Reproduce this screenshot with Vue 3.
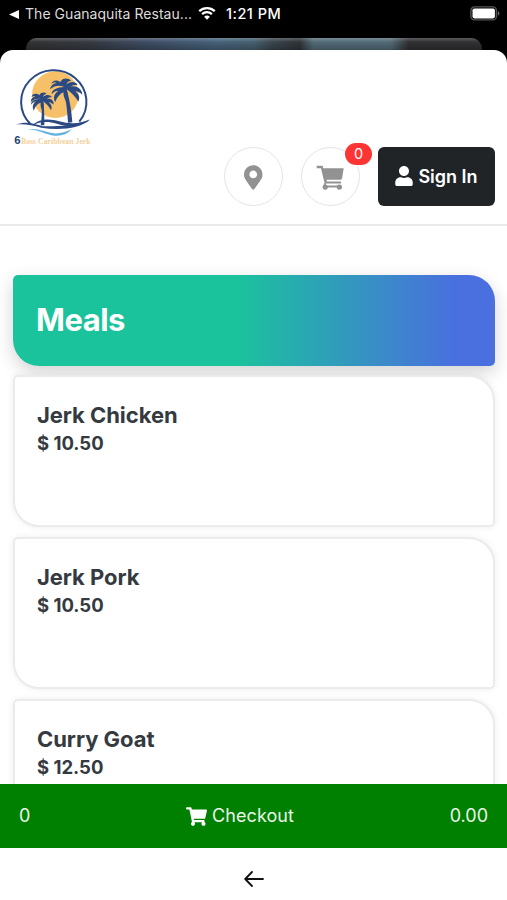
<script setup>
const meals = [
  { name: 'Jerk Chicken', price: '$ 10.50' },
  { name: 'Jerk Pork', price: '$ 10.50' },
  { name: 'Curry Goat', price: '$ 12.50' },
]
const cart = { count: 0, total: '0.00' }
const cartPath = 'M528.12 301.319l47.273-208C578.806 78.301 567.391 64 551.99 64H159.208l-9.166-44.81C147.758 8.021 137.93 0 126.529 0H24C10.745 0 0 10.745 0 24v16c0 13.255 10.745 24 24 24h69.883l70.248 343.435C147.325 417.1 136 435.222 136 456c0 30.928 25.072 56 56 56s56-25.072 56-56c0-15.674-6.447-29.835-16.824-40h209.647C430.447 426.165 424 440.326 424 456c0 30.928 25.072 56 56 56s56-25.072 56-56c0-22.172-12.888-41.332-31.579-50.405l5.517-24.276c3.413-15.018-8.002-29.319-23.403-29.319H218.117l-6.545-32h293.145c11.206 0 20.92-7.754 23.403-18.681z'
</script>

<template>
  <div class="screen">
    <div class="status">
      <svg class="back-tri" viewBox="0 0 10 9"><path d="M0 4.5L10 0v9z" /></svg>
      <span class="from-app">The Guanaquita Restau...</span>
      <svg class="wifi" viewBox="0 0 18 14">
        <path d="M1.2 5.2a11.4 11.4 0 0 1 15.6 0M4.1 8.1a7.2 7.2 0 0 1 9.8 0" />
        <path class="dot" d="M9 13.8L6.1 10.8a4.2 4.2 0 0 1 5.8 0z" />
      </svg>
      <span class="time">1:21 PM</span>
      <svg class="battery" viewBox="0 0 30 15">
        <rect class="shell" x=".9" y=".9" width="25.5" height="13" rx="3.5" />
        <rect class="charge" x="2.5" y="2.4" width="22.4" height="10" rx="1.8" />
        <path class="tip" d="M27.8 5.2c2.2.5 2.2 3.9 0 4.4z" />
      </svg>
    </div>
    <div class="behind"></div>

    <main class="sheet">
      <header class="header">
        <svg class="logo" viewBox="0 0 240 255">
          <circle cx="127" cy="89" r="70" fill="#f6c068" />
          <path d="M53 178A98 95 0 1 1 199 170" fill="none" stroke="#2b4a84" stroke-width="6" />
          <g fill="#2b4a84">
            <path d="M151 72C157 95 163 130 165 173L178 172C175 130 168 96 160 72z" />
            <path d="M84 106C88 130 87 155 83 181L94 181C94 153 94 127 90 106z" />
            <path d="M153 66C139 60 126 61 111 73C113 61 123 55 131 54C124 51 119 53 115 57C118 45 132 43 142 51C148 38 167 38 174 48C165 48 162 53 161 58C172 48 188 49 194 59C184 59 176 61 171 65C190 61 207 71 208 89C201 83 194 79 187 79C198 88 202 98 196 110C188 96 176 84 161 73C166 86 165 99 158 108C154 100 151 91 151 82C143 85 132 97 127 111C119 100 123 86 136 77C128 77 120 82 116 88C115 75 133 66 153 66z" />
            <path d="M84 102C74 99 62 102 53 111C53 101 59 96 67 95C62 93 58 94 56 96C58 86 70 83 79 91C81 83 93 79 101 86C94 88 91 91 91 95C99 88 112 88 117 97C109 97 104 99 101 101C115 99 123 108 122 119C116 114 111 111 107 112C116 119 118 128 114 136C108 124 99 116 90 109C94 120 93 129 87 135C83 128 82 120 83 113C73 116 65 125 63 137C56 127 60 116 69 109C62 110 58 114 55 119C52 108 67 101 84 102z" />
            <g transform="translate(-16.700 0) scale(1.168 1)">
              <path d="M22 179C49 167 68 176 91 184C132 185 175 180 212 164C187 190 136 197 87 188C64 181 43 176 22 179z" />
              <path d="M65 180C83 160 109 161 133 169C161 178 188 177 212 163C185 188 154 186 127 176C104 168 85 169 65 180z" />
            </g>
          </g>
          <path d="M40 194C73 187 96 202 122 205C141 206 158 202 175 193C158 217 124 215 99 206C77 198 58 193 40 194z" fill="#65b4df" />
          <text class="logo-six" x="4" y="238">6</text>
          <text class="logo-name" x="24" y="236" textLength="209" lengthAdjust="spacingAndGlyphs">Boss Caribbean Jerk</text>
        </svg>
        <nav class="actions">
          <button class="round" aria-label="Location">
            <svg class="pin" viewBox="0 0 384 512"><path d="M172.268 501.67C26.97 291.031 0 269.413 0 192 0 85.961 85.961 0 192 0s192 85.961 192 192c0 77.413-26.97 99.031-172.268 309.67-9.535 13.774-29.93 13.773-39.464 0zM192 272c44.183 0 80-35.817 80-80s-35.817-80-80-80-80 35.817-80 80 35.817 80 80 80z" /></svg>
          </button>
          <button class="round" aria-label="Cart">
            <svg class="basket" viewBox="0 0 88 80">
              <path d="M2 4H20L22 12H84L79 43Q78 47 74 47H32L33 52H76V58H31Q26 58 25 53L15 12H2z" />
              <path d="M28 57L25 67H72" class="rail" />
              <circle cx="28" cy="69" r="8" /><circle cx="71" cy="69" r="8" />
            </svg>
            <span class="badge">{{ cart.count }}</span>
          </button>
          <button class="signin">
            <svg class="user" viewBox="0 0 448 512"><path d="M224 256c70.700 0 128-57.300 128-128S294.700 0 224 0 96 57.300 96 128s57.300 128 128 128zm89.600 32h-16.700c-22.200 10.200-46.900 16-72.900 16s-50.600-5.800-72.900-16h-16.700C60.200 288 0 348.200 0 422.400V464c0 26.500 21.500 48 48 48h352c26.500 0 48-21.500 48-48v-41.600c0-74.200-60.200-134.400-134.400-134.400z" /></svg>
            <span>Sign In</span>
          </button>
        </nav>
      </header>

      <section class="menu">
        <h1 class="category">Meals</h1>
        <article v-for="meal in meals" :key="meal.name" class="meal">
          <h2>{{ meal.name }}</h2>
          <p>{{ meal.price }}</p>
        </article>
      </section>
    </main>

    <div class="checkout">
      <span>{{ cart.count }}</span>
      <span class="label">
        <svg class="cart" viewBox="0 0 576 512"><path :d="cartPath" /></svg>
        <span>Checkout</span>
      </span>
      <span class="total">{{ cart.total }}</span>
    </div>
    <footer class="bottom">
      <svg viewBox="0 0 20 16"><path d="M19 8H1.500M8 1L1.200 8L8 15" /></svg>
    </footer>
  </div>
</template>

<style>
body { margin: 0; background: #000; }
</style>

<style scoped>
* { box-sizing: border-box; }
.screen { width: 507px; height: 900px; display: flex; flex-direction: column; overflow: hidden; background: #000; font-family: Inter, "Liberation Sans", sans-serif; color: #343a40; }
.status { flex: none; height: 38px; display: flex; align-items: center; padding: 0 7px 10px 9px; color: #ddd; font-size: 14px; line-height: 18px; white-space: nowrap; }
.back-tri { width: 10px; height: 9px; fill: #fff; flex: none; }
.from-app { width: 167px; margin-left: 6px; letter-spacing: .04px; flex: none; }
.wifi { width: 18px; height: 14px; margin-left: 6px; margin-top: -2px; fill: none; stroke: #fff; stroke-width: 2.3; flex: none; }
.wifi .dot { fill: #fff; stroke: none; }
.time { margin-left: 10px; font-size: 14.500px; font-weight: 500; color: #fff; letter-spacing: .5px; }
.battery { width: 30px; height: 15px; margin-left: auto; margin-top: -1px; }
.shell { fill: none; stroke: #555; stroke-width: 1.4; }
.charge { fill: #fff; }
.tip { fill: #666; }
.behind { flex: none; height: 24px; margin: 0 25px 0 26px; border-radius: 11px 11px 0 0; background: linear-gradient(180deg, rgba(255,255,255,.22), transparent 4px, rgba(0,0,0,.25) 12px), linear-gradient(90deg, #333 0, #363a42 14%, #3e4c63 26%, #46627a 42%, #46606f 50%, #3a464e 54%, #2f3438 60%, #536b78 63%, #536b78 80%, #303032 84%, #303032 100%); }
.sheet { flex: 1; min-height: 0; margin-top: -12px; overflow: hidden; border-radius: 13px 13px 0 0; background: #fff; }
.header { height: 176px; padding: 15px 12px 18px 13px; border-bottom: 2px solid #eaeaea; display: flex; flex-direction: column; }
.logo { display: block; flex: none; width: 80px; height: 85px; }
.logo-six { font: bold 34px "Liberation Sans", sans-serif; fill: #263f78; }
.logo-name { font: bold 23px "Liberation Serif", serif; fill: #f5d19b; }
.actions { display: flex; justify-content: flex-end; margin-top: -3px; }
button { font-family: inherit; padding: 0; border: 0; }
.round { position: relative; width: 59px; height: 59px; margin-right: 18px; border-radius: 50%; border: 1px solid #e4e4e4; background: #fff; display: flex; align-items: center; justify-content: center; fill: #929292; }
.pin { width: 18.500px; height: 25px; margin-top: 1px; }
.basket { width: 29px; height: 27px; margin-top: 1px; }
.rail { fill: none; stroke: #929292; stroke-width: 6; }
.badge { position: absolute; top: -5px; right: -13px; width: 27px; height: 22px; border-radius: 11px; background: #fc3434; color: #fff; font-size: 14.500px; line-height: 22px; text-align: center; }
.signin { width: 117px; height: 59px; border-radius: 6px; background: #202427; color: #fff; display: flex; align-items: center; justify-content: center; gap: 5px; font-size: 18px; font-weight: 600; white-space: nowrap; }
.user { width: 18px; height: 20px; fill: #fff; margin-bottom: 1px; }
.menu { padding: 49px 12px 0 13px; }
.category { position: relative; height: 91px; margin: 0 0 9px; padding: 0 23px; border-radius: 5px 26px 5px 26px; background: linear-gradient(90deg, #1ac39c 0, #1ac39c 46%, #4a6fdf 92%); box-shadow: 0 6px 18px rgba(0,0,0,.18); color: #fff; font-size: 31px; font-weight: 700; line-height: 89px; letter-spacing: -.5px; }
.meal { position: relative; height: 152px; margin-bottom: 10px; padding: 25px 22px; border: 2px solid #ebebeb; border-radius: 5px 26px 5px 26px; background: #fff; box-shadow: 0 0 7px rgba(0,0,0,.07); }
.meal h2 { margin: 0; font-size: 22px; line-height: 27px; font-weight: 650; letter-spacing: -.05px; }
.meal p { margin: 0; font-size: 18.500px; line-height: 28px; font-weight: 650; letter-spacing: -.02px; }
.checkout { flex: none; height: 64px; padding: 0 19px; display: grid; grid-template-columns: 1fr auto 1fr; align-items: center; background: #008000; color: #eaf5ea; font-size: 18px; line-height: 22px; }
.label { display: flex; align-items: center; gap: 5px; margin-left: -27px; letter-spacing: .1px; }
.cart { width: 21px; height: 19px; fill: #fff; }
.total { text-align: right; }
.bottom { flex: none; height: 52px; display: flex; align-items: center; justify-content: center; padding-top: 9px; background: #fff; }
.bottom svg { width: 20px; height: 16px; fill: none; stroke: #111; stroke-width: 1.800; stroke-linecap: round; stroke-linejoin: round; }
</style>
